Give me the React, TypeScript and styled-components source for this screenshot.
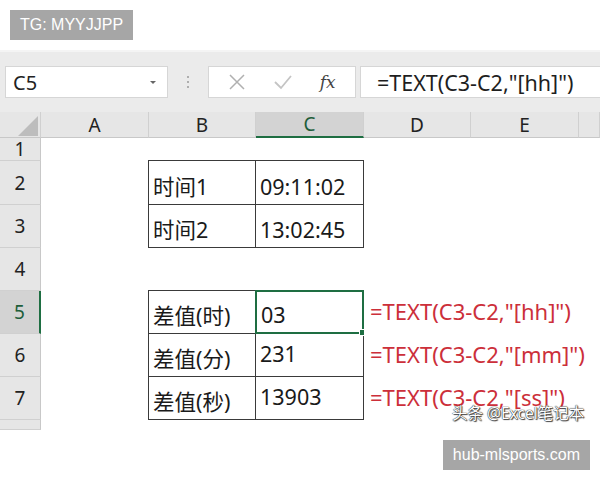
import React from "react";
import styled, {createGlobalStyle} from "styled-components";

const GlobalStyle = createGlobalStyle`
  html, body {
    margin: 0;
    padding: 0;
    background: #ffffff;
  }
`;

const FONT = `"Noto Sans", "Noto Sans CJK SC", sans-serif`;

const Page = styled.div`
  position: relative;
  display: flex;
  flex-flow: column nowrap;
  width: 600px;
  height: 480px;
  overflow: hidden;
  background: #ffffff;
  font-family: ${FONT};
`;

const TopBand = styled.div`
  display: flex;
  height: 50px;
  padding: 10px 0 0 10px;
  box-sizing: border-box;
`;

const Badge = styled.div`
  display: flex;
  align-items: center;
  height: 30px;
  padding: 0 10px;
  background: #a6a6a6;
  color: #ffffff;
  font-family: "Liberation Sans", Arial, sans-serif;
  font-size: 16px;
`;

const Sheet = styled.div`
  display: flex;
  flex-flow: column nowrap;
  height: 380px;
  background: #ebebeb;
  border-top: 2px solid #f4f4f4;
  box-sizing: border-box;
`;

const FormulaBar = styled.div`
  display: flex;
  align-items: center;
  height: 62px;
  padding: 0 0 0 5px;
  box-sizing: border-box;
`;

const Box = styled.div<{ $width?: number }>`
  display: flex;
  align-items: center;
  flex: ${p => (p.$width ? `0 0 ${p.$width}px` : "1 1 auto")};
  min-width: 0;
  height: 32px;
  box-sizing: border-box;
  background: #ffffff;
  border: 1px solid #d6d6d6;
  overflow: hidden;
`;

const NameText = styled.span`
  flex: 1;
  padding-left: 7px;
  font-size: 20px;
  color: #222;
`;

const Caret = styled.span`
  width: 0;
  height: 0;
  margin-right: 11px;
  border-left: 3px solid transparent;
  border-right: 3px solid transparent;
  border-top: 3px solid #666;
`;

const Dots = styled.div`
  display: flex;
  flex: 0 0 40px;
  flex-flow: column nowrap;
  justify-content: center;
  align-items: center;
  gap: 3px;

  span {
    width: 2px;
    height: 2px;
    background: #9a9a9a;
    border-radius: 50%;
  }
`;

const FxButtons = styled(Box)`
  justify-content: space-around;
  padding: 0 6px;
  margin-right: 4px;
`;

const Fx = styled.span`
  font-family: "DejaVu Serif", "Liberation Serif", serif;
  font-style: italic;
  font-size: 17px;
  color: #444;
`;

const FormulaText = styled.span`
  padding-left: 16px;
  font-size: 21.5px;
  color: #1e1e1e;
  white-space: nowrap;
`;

const Grid = styled.div`
  display: grid;
  grid-template-columns: 41px 108px 107px 108px 107px 108px 21px;
  grid-template-rows: 26px 23px 44px 43px 43px 43px 43px 43px 10px;
`;

const Corner = styled.div`
  position: relative;
  background: #e6e6e6;
  border-right: 1px solid #d0d0d0;
  border-bottom: 1px solid #c8c8c8;

  &::after {
    content: "";
    position: absolute;
    right: 2px;
    bottom: 1px;
    border-left: 20px solid transparent;
    border-bottom: 20px solid #bdbdbd;
  }
`;

const ColHead = styled.div<{ $active?: boolean }>`
  display: flex;
  align-items: center;
  justify-content: center;
  background: ${p => (p.$active ? "#d3d3d3" : "#e6e6e6")};
  border-right: 1px solid #d0d0d0;
  border-bottom: ${p => (p.$active ? "2px solid #1e6e42" : "1px solid #c8c8c8")};
  font-size: 19px;
  color: ${p => (p.$active ? "#1e5e3a" : "#222")};
`;

const RowHead = styled.div<{ $active?: boolean }>`
  display: flex;
  align-items: center;
  justify-content: center;
  background: ${p => (p.$active ? "#d3d3d3" : "#e6e6e6")};
  border-bottom: 1px solid #d0d0d0;
  border-right: ${p => (p.$active ? "2px solid #1e6e42" : "1px solid #c8c8c8")};
  box-sizing: border-box;
  font-size: 19px;
  color: ${p => (p.$active ? "#1e5e3a" : "#222")};
`;

const Cell = styled.div<{ $boxed?: boolean; $align?: "bottom" | "middle" }>`
  display: flex;
  align-items: ${p => (p.$align === "middle" ? "center" : "flex-end")};
  padding: 0 4px 3px;
  box-sizing: border-box;
  background: #ffffff;
  font-size: 21.5px;
  line-height: 28px;
  color: #1a1a1a;
  white-space: nowrap;
  ${p => (p.$boxed ? "border: 1.5px solid #3a3a3a; margin: -1px 0 0 -1px;" : "")}
`;

const Selected = styled(Cell)`
  position: relative;
  border: 2px solid #1e6e42;
  margin: -1px 0 0 -1px;
  z-index: 1;

  &::after {
    content: "";
    position: absolute;
    right: -4px;
    bottom: -4px;
    width: 5px;
    height: 5px;
    background: #1e6e42;
    border: 1px solid #ffffff;
  }
`;

const RedFormula = styled(Cell)`
  position: relative;
  z-index: 2;
  overflow: visible;
  padding-left: 6px;
  color: #cc2f3a;
  font-size: 22px;
`;

const Watermark = styled.div`
  position: absolute;
  left: 452px;
  top: 401px;
  z-index: 3;
  font-size: 15.5px;
  color: #ffffff;
  text-shadow: 0 0 1px #222, 0 0 1px #222, 1px 1px 1px #444;
  white-space: nowrap;
`;

const BottomBand = styled.div`
  display: flex;
  justify-content: flex-end;
  flex: 1;
  padding: 10px 10px 0 0;
  box-sizing: border-box;
`;

const XIcon = () => (
    <svg width="18" height="18" viewBox="0 0 18 18">
        <path d="M2 2 L16 16 M16 2 L2 16" stroke="#b0b0b0" strokeWidth="1.5" fill="none"/>
    </svg>
);

const CheckIcon = () => (
    <svg width="20" height="18" viewBox="0 0 20 18">
        <path d="M2 9 L8 15 L18 3" stroke="#c4c4c4" strokeWidth="1.8" fill="none"/>
    </svg>
);

const columns = ["A", "B", "C", "D", "E"];

type RowData = {
    label?: string;
    value?: string;
    formula?: string;
    align?: "bottom" | "middle";
    selected?: boolean;
};

const rows: RowData[] = [
    {},
    {label: "时间1", value: "09:11:02"},
    {label: "时间2", value: "13:02:45"},
    {},
    {label: "差值(时)", value: "03", formula: "=TEXT(C3-C2,\"[hh]\")", selected: true},
    {label: "差值(分)", value: "231", formula: "=TEXT(C3-C2,\"[mm]\")", align: "middle"},
    {label: "差值(秒)", value: "13903", formula: "=TEXT(C3-C2,\"[ss]\")", align: "middle"},
    {},
];

export default function App() {
    return (
        <Page>
            <GlobalStyle/>
            <TopBand>
                <Badge>TG: MYYJJPP</Badge>
            </TopBand>
            <Sheet>
                <FormulaBar>
                    <Box $width={163}>
                        <NameText>C5</NameText>
                        <Caret/>
                    </Box>
                    <Dots><span/><span/><span/></Dots>
                    <FxButtons $width={148}>
                        <XIcon/>
                        <CheckIcon/>
                        <Fx>fx</Fx>
                    </FxButtons>
                    <Box style={{marginRight: -2}}>
                        <FormulaText>=TEXT(C3-C2,"[hh]")</FormulaText>
                    </Box>
                </FormulaBar>
                <Grid>
                    <Corner/>
                    {columns.map(c => (
                        <ColHead key={c} $active={c === "C"}>{c}</ColHead>
                    ))}
                    <ColHead/>
                    {rows.map((r, i) => {
                        const n = i + 1;
                        const boxed = !!r.label;
                        return (
                            <React.Fragment key={n}>
                                <RowHead $active={n === 5}>{n <= 7 ? n : ""}</RowHead>
                                <Cell/>
                                <Cell $boxed={boxed} $align="bottom">{r.label}</Cell>
                                {r.selected
                                    ? <Selected $align="bottom">{r.value}</Selected>
                                    : <Cell $boxed={boxed} $align={r.align}>{r.value}</Cell>}
                                {r.formula
                                    ? <RedFormula $align="middle">{r.formula}</RedFormula>
                                    : <Cell/>}
                                <Cell/>
                                <Cell/>
                            </React.Fragment>
                        );
                    })}
                </Grid>
            </Sheet>
            <Watermark>头条 @Excel笔记本</Watermark>
            <BottomBand>
                <Badge>hub-mlsports.com</Badge>
            </BottomBand>
        </Page>
    );
}
